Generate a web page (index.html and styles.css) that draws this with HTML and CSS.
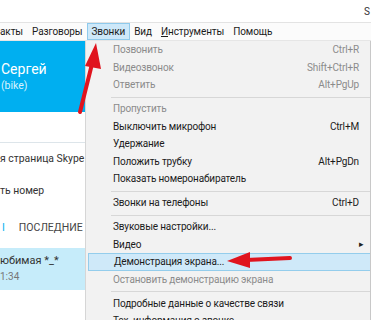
FILE: index.html
```html
<!DOCTYPE html>
<html lang="ru">

<head>
  <meta charset="UTF-8">
  <title>Звонки</title>
  <link rel="stylesheet" href="styles.css">
</head>

<body>
  <div class="window">
    <div class="titlebar"><span class="title-s">S</span></div>

    <div class="menubar">
      <span class="menu-item cut">акты</span>
      <span class="menu-item">Разговоры</span>
      <span class="menu-item active">Звонки</span>
      <span class="menu-item">Вид</span>
      <span class="menu-item"><u>И</u>нструменты</span>
      <span class="menu-item">Помощь</span>
    </div>

    <div class="main">
      <div class="sidebar">
        <div class="profile">
          <div class="profile-name">Сергей</div>
          <div class="profile-mood">(bike)</div>
        </div>
        <div class="side-gap"></div>
        <div class="side-link">я страница Skype</div>
        <div class="side-link">ть номер</div>
        <div class="side-tabs"><span class="tab-mark">I</span><span>ПОСЛЕДНИЕ</span></div>
        <div class="contact">
          <div class="contact-name">юбимая *_*</div>
          <div class="contact-time">1:34</div>
        </div>
      </div>

      <div class="dropdown">
        <div class="row disabled"><span>Позвонить</span><span class="key">Ctrl+R</span></div>
        <div class="row disabled"><span>Видеозвонок</span><span class="key">Shift+Ctrl+R</span></div>
        <div class="row disabled"><span>Ответить</span><span class="key">Alt+PgUp</span></div>
        <div class="sep"></div>
        <div class="row disabled"><span>Пропустить</span></div>
        <div class="row"><span>Выключить микрофон</span><span class="key">Ctrl+M</span></div>
        <div class="row"><span>Удержание</span></div>
        <div class="row"><span>Положить трубку</span><span class="key">Alt+PgDn</span></div>
        <div class="row"><span>Показать номеронабиратель</span></div>
        <div class="sep"></div>
        <div class="row"><span>Звонки на телефоны</span><span class="key">Ctrl+D</span></div>
        <div class="sep"></div>
        <div class="row"><span>Звуковые настройки...</span></div>
        <div class="row"><span>Видео</span><span class="submenu">&#9656;</span></div>
        <div class="row hover"><span>Демонстрация экрана...</span></div>
        <div class="row disabled"><span>Остановить демонстрацию экрана</span></div>
        <div class="sep"></div>
        <div class="row"><span>Подробные данные о качестве связи</span></div>
        <div class="row"><span>Тех. информация о звонке</span></div>
      </div>
    </div>

    <!-- red arrows drawn over the screenshot -->
    <svg class="arrows" width="371" height="320" viewBox="0 0 371 320">
      <line x1="80" y1="112" x2="92" y2="64" stroke="#e0141e" stroke-width="4" stroke-linecap="round" />
      <polygon points="96,43 85,66 101,69" fill="#e0141e" />
      <line x1="290" y1="258" x2="246" y2="260" stroke="#e0141e" stroke-width="4" stroke-linecap="round" />
      <polygon points="227,261 250,252 250,268" fill="#e0141e" />
    </svg>
  </div>
</body>

</html>
```

FILE: styles.css
```css
body {
  margin: 0;
  padding: 0;
  font-family: Roboto, "Noto Sans", Arial, sans-serif;
  color: #1b1b1b;
  background-color: #fff;
}

.window {
  position: relative;
  width: 371px;
  height: 320px;
  overflow: hidden;
  background-color: #fff;
}

.titlebar {
  height: 22px;
  border-bottom: 1px solid #e3e3e3;
  display: flex;
  justify-content: flex-end;
  align-items: center;
}

.title-s {
  font-size: 10px;
  color: #333;
  margin-right: 1px;
}

.menubar {
  height: 17px;
  display: flex;
  align-items: center;
  font-size: 10px;
  letter-spacing: -0.1px;
  background-color: #fbfbfb;
  border-bottom: 1px solid #e6e6e6;
}

.menu-item {
  padding: 0 3.5px;
  height: 15px;
  line-height: 15px;
  border: 1px solid transparent;
}

.menu-item.cut {
  padding-left: 0;
  border-left: 0;
}

.menu-item.active {
  background-color: #cde8f9;
  border-color: #8fcaec;
}

.main {
  display: flex;
  height: 279px;
}

.sidebar {
  width: 85px;
  flex-shrink: 0;
  border-right: 1px solid #d6d6d6;
  overflow: hidden;
  white-space: nowrap;
}

.profile {
  height: 71px;
  background-color: #00aff0;
  color: #fff;
  padding: 19px 0 0 1px;
  box-sizing: border-box;
}

.profile-name {
  font-size: 14px;
  line-height: 18px;
}

.profile-mood {
  font-size: 10.5px;
  line-height: 16px;
  color: #d8f3fd;
}

.side-gap {
  height: 31px;
  border-bottom: 1px solid #dde5ea;
  box-sizing: border-box;
}

.side-link {
  font-size: 10.4px;
  line-height: 32px;
  height: 32px;
  color: #333;
}

.side-tabs {
  display: flex;
  gap: 14px;
  align-items: center;
  font-size: 10.5px;
  color: #444;
  height: 41px;
}

.tab-mark {
  color: #00aff0;
  padding-left: 2px;
}

.contact {
  height: 42px;
  background-color: #c6ecfa;
  padding-top: 5px;
  box-sizing: border-box;
}

.contact-name {
  font-size: 11px;
  line-height: 16px;
  color: #333;
}

.contact-time {
  font-size: 10px;
  line-height: 16px;
  color: #777;
}

.dropdown {
  flex: 1;
  background-color: #f2f2f2;
  border-right: 1px solid #c8c8c8;
  font-size: 10px;
  letter-spacing: -0.15px;
}

.row {
  height: 17.5px;
  display: flex;
  align-items: center;
  justify-content: space-between;
  padding: 0 11px 0 25px;
  border-top: 1px solid transparent;
  border-bottom: 1px solid transparent;
  box-sizing: border-box;
  margin-left: 2px;
}

.row.disabled {
  color: #8b8b8b;
}

.row.hover {
  background-color: #cfe9f9;
  border: 1px solid #94cdec;
  border-right: 0;
}

.submenu {
  font-size: 9px;
  color: #222;
  margin-right: -5px;
}

.sep {
  height: 1px;
  background-color: #d7d7d7;
  margin: 3px 0 2.5px 25px;
}

.arrows {
  position: absolute;
  top: 0;
  left: 0;
  pointer-events: none;
}
```
